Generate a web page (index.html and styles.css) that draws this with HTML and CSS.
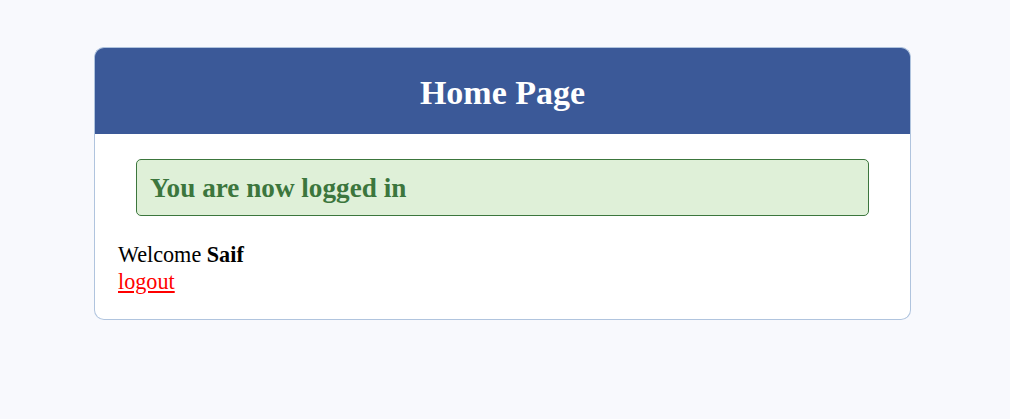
FILE: index.html
```html
<!DOCTYPE html>
<html>
<head>
<meta charset="utf-8">
<title>Home</title>
<link rel="stylesheet" href="styles.css">
</head>
<body>
<div class="card">
  <div class="header">
    <h2 class="title">Home Page</h2>
  </div>
  <div class="content">
    <div class="success">
      <h3 class="success-text">You are now logged in</h3>
    </div>
    <div class="user">
      <p class="welcome">Welcome <strong>Saif</strong></p>
      <p class="logout-row"><a class="logout" href="#">logout</a></p>
    </div>
  </div>
</div>
</body>
</html>
```

FILE: styles.css
```css
html, body {
  margin: 0;
  padding: 0;
}
body {
  background: #f8f9fd;
  font-family: "Liberation Serif", "Times New Roman", serif;
  color: #000;
}
.card {
  width: 817px;
  margin: 47px 0 0 94px;
}
.header {
  background: #3b5998;
  border: 1px solid #b0c4de;
  border-bottom: none;
  border-radius: 10px 10px 0 0;
  height: 86px;
  display: flex;
  align-items: center;
  justify-content: center;
}
.title {
  margin: 0;
  color: #fff;
  font-size: 34px;
  font-weight: bold;
  line-height: 1;
  padding-top: 3px;
}
.content {
  background: #fff;
  border: 1px solid #b0c4de;
  border-top: none;
  border-radius: 0 0 10px 10px;
  padding: 25px 23px 24px;
}
.success {
  margin: 0 18px;
  background: #dff0d8;
  border: 1px solid #3c763d;
  border-radius: 5px;
  height: 55px;
  display: flex;
  align-items: center;
  padding: 0 13px;
}
.success-text {
  margin: 0;
  color: #3c763d;
  font-size: 27.2px;
  font-weight: bold;
  line-height: 1;
  padding-top: 2px;
}
.user {
  margin-top: 25px;
  font-size: 22.2px;
  line-height: 27px;
}
.welcome, .logout-row {
  margin: 0;
}
.logout {
  color: #ff0000;
}
```
